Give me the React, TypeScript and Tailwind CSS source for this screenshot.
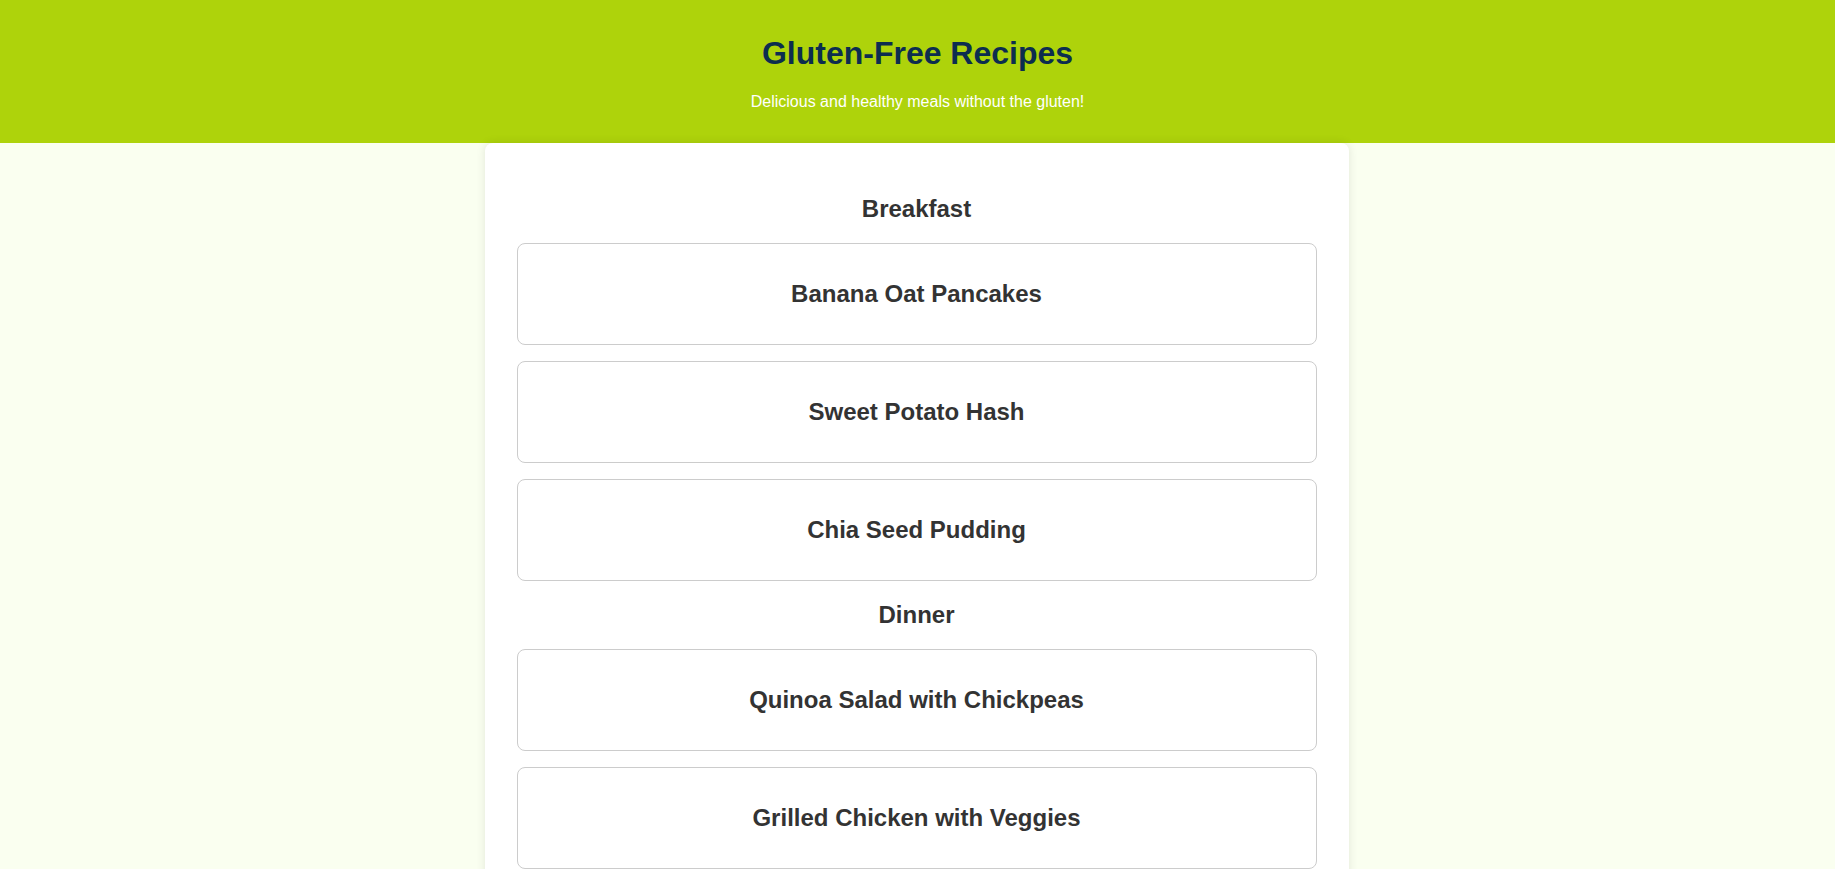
import React from "react";

const sections = [
  { title: "Breakfast", items: ["Banana Oat Pancakes", "Sweet Potato Hash", "Chia Seed Pudding"] },
  { title: "Dinner", items: ["Quinoa Salad with Chickpeas", "Grilled Chicken with Veggies"] },
];

export default function App() {
  return (
    <div
      className="min-h-screen bg-[#fafff0] text-[#333333]"
      style={{ fontFamily: '"Liberation Sans", Arial, sans-serif' }}
    >
      <header className="bg-[#aed30b] pt-[35px] pb-[32px] text-center">
        <h1 className="text-[32px] leading-[37px] font-bold text-[#0c2d4f]">Gluten-Free Recipes</h1>
        <p className="mt-[21px] text-[16px] leading-[18px] text-white">Delicious and healthy meals without the gluten!</p>
      </header>
      <main className="relative mx-auto w-[864px] -translate-x-[1px] bg-white rounded-[8px] shadow-[0_0_10px_rgba(0,0,0,0.1)] px-8 pt-[52px] pb-8 flex flex-col gap-[20px]">
        {sections.map((s) => (
          <section key={s.title} className="flex flex-col">
            <h2 className="text-center text-[24px] leading-[28px] font-bold">{s.title}</h2>
            <div className="mt-[20px] flex flex-col gap-4">
              {s.items.map((it) => (
                <div
                  key={it}
                  className="border border-[#cccccc] rounded-[8px] bg-white py-[36px] text-center"
                >
                  <h3 className="text-[24px] leading-[28px] font-bold">{it}</h3>
                </div>
              ))}
            </div>
          </section>
        ))}
      </main>
    </div>
  );
}
